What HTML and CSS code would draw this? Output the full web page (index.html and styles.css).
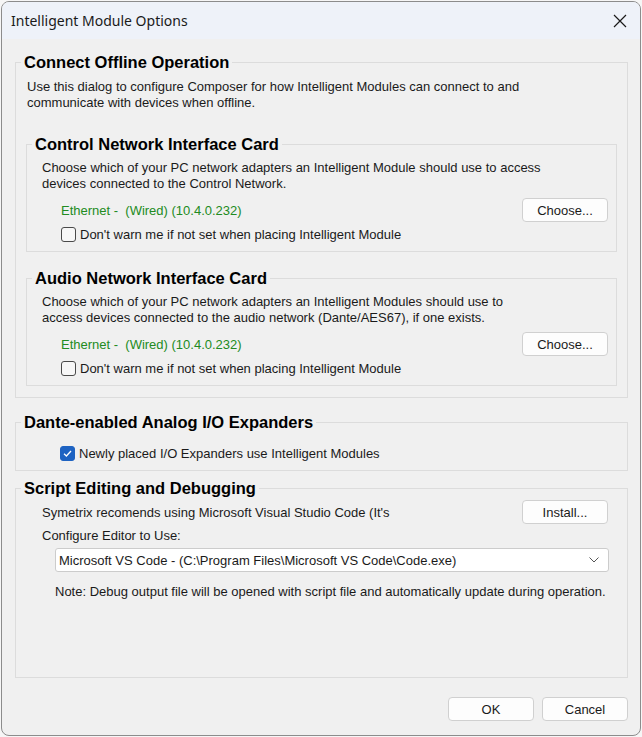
FILE: index.html
```html
<!doctype html>
<html lang="en">
  <head>
    <meta charset="UTF-8" />
    <meta name="viewport" content="width=device-width, initial-scale=1.0" />
    <title>Intelligent Module Options</title>
    <link rel="stylesheet" href="styles.css">
  </head>
  <body>
    <div class="dialog">
      <div class="titlebar">
        <span class="title">Intelligent Module Options</span>
        <svg class="close" width="14" height="14" viewBox="0 0 14 14">
          <path d="M1 1 L13 13 M13 1 L1 13" stroke="#1a1a1a" stroke-width="1.2" fill="none" />
        </svg>
      </div>

      <div class="content">
        <fieldset class="group offline">
          <legend>Connect Offline Operation</legend>
          <div class="group-body">
            <p class="intro">
              Use this dialog to configure Composer for how Intelligent Modules can connect to and<br>
              communicate with devices when offline.
            </p>

            <fieldset class="group inner">
              <legend>Control Network Interface Card</legend>
              <div class="group-body">
                <p class="desc">
                  Choose which of your PC network adapters an Intelligent Module should use to access<br>
                  devices connected to the Control Network.
                </p>
                <div class="adapter-row">
                  <span class="adapter">Ethernet -&nbsp; (Wired) (10.4.0.232)</span>
                  <button class="btn">Choose...</button>
                </div>
                <label class="check">
                  <span class="box"></span>
                  Don't warn me if not set when placing Intelligent Module
                </label>
              </div>
            </fieldset>

            <fieldset class="group inner">
              <legend>Audio Network Interface Card</legend>
              <div class="group-body">
                <p class="desc">
                  Choose which of your PC network adapters an Intelligent Modules should use to<br>
                  access devices connected to the audio network (Dante/AES67), if one exists.
                </p>
                <div class="adapter-row">
                  <span class="adapter">Ethernet -&nbsp; (Wired) (10.4.0.232)</span>
                  <button class="btn">Choose...</button>
                </div>
                <label class="check">
                  <span class="box"></span>
                  Don't warn me if not set when placing Intelligent Module
                </label>
              </div>
            </fieldset>
          </div>
        </fieldset>

        <fieldset class="group dante">
          <legend>Dante-enabled Analog I/O Expanders</legend>
          <div class="group-body">
            <label class="check">
              <span class="box checked">
                <svg width="11" height="11" viewBox="0 0 11 11">
                  <path d="M2 5.8 L4.4 8 L9 3" stroke="#fff" stroke-width="1.3" fill="none" />
                </svg>
              </span>
              Newly placed I/O Expanders use Intelligent Modules
            </label>
          </div>
        </fieldset>

        <fieldset class="group script">
          <legend>Script Editing and Debugging</legend>
          <div class="group-body">
            <div class="install-row">
              <span>Symetrix recomends using Microsoft Visual Studio Code (It's</span>
              <button class="btn">Install...</button>
            </div>
            <p class="editor-label">Configure Editor to Use:</p>
            <div class="select">
              <span>Microsoft VS Code - (C:\Program Files\Microsoft VS Code\Code.exe)</span>
              <svg width="10" height="6" viewBox="0 0 10 6">
                <path d="M0.5 0.5 L5 5 L9.5 0.5" stroke="#555" stroke-width="1" fill="none" />
              </svg>
            </div>
            <p class="note">Note: Debug output file will be opened with script file and automatically update during operation.</p>
          </div>
        </fieldset>
      </div>

      <div class="footer">
        <button class="btn">OK</button>
        <button class="btn">Cancel</button>
      </div>
    </div>
  </body>
</html>
```

FILE: styles.css
```css
* {
  margin: 0;
  padding: 0;
  box-sizing: border-box;
}

body {
  background: #f6f6f6;
  font-family: "Liberation Sans", Arial, sans-serif;
  font-size: 13px;
  color: #1a1a1a;
}

.dialog {
  width: 640px;
  height: 735px;
  margin: 1px 1px 0 1px;
  border: 1px solid #8c8c8c;
  border-radius: 8px;
  overflow: hidden;
  background: #f0f0f0;
  display: flex;
  flex-direction: column;
}

/* window caption */
.titlebar {
  height: 37px;
  flex: none;
  background: #eef2f9;
  display: flex;
  align-items: center;
  justify-content: space-between;
  padding: 0 13px 0 9px;
}

.title {
  font-family: "Noto Sans", "Open Sans", sans-serif;
  font-size: 14px;
  color: #1a1a1a;
}

.content {
  flex: 1;
  display: flex;
  flex-direction: column;
  padding: 13px 12px 0 13px;
}

/* group boxes */
.group {
  border: 1px solid #dcdcdc;
  min-width: 0;
  padding: 0;
}

.group legend {
  font-family: "Liberation Sans", Arial, sans-serif;
  font-weight: bold;
  font-size: 16.5px;
  line-height: 20px;
  color: #000;
  margin-left: 5px;
  padding: 0 3px;
}

.offline .group-body {
  padding: 7px 10px 11px 11px;
}

.intro {
  line-height: 16px;
  margin-bottom: 23px;
}

.inner {
  margin-left: -1px;
}

.inner .group-body {
  padding: 6px 8px 9px 15px;
}

.inner + .inner {
  margin-top: 16px;
}

.desc {
  line-height: 16px;
}

.adapter-row {
  display: flex;
  align-items: center;
  justify-content: space-between;
  margin-top: 6px;
  padding-left: 19px;
}

.adapter {
  color: #228b22;
}

.check {
  display: flex;
  align-items: center;
  gap: 4px;
  height: 16px;
  margin-top: 4px;
  margin-left: 19px;
}

.box {
  width: 15px;
  height: 15px;
  border: 1px solid #4a4a4a;
  border-radius: 3px;
  background: #f7f7f7;
  display: flex;
  align-items: center;
  justify-content: center;
}

.box.checked {
  background: #1e63c2;
  border-color: #1e63c2;
}

.dante {
  margin-top: 14px;
}

.dante .group-body {
  padding: 13px 10px 9px 10px;
}

.dante .check {
  margin-top: 0;
  margin-left: 34px;
}

.script {
  flex: 1;
  margin-top: 7px;
}

.script .group-body {
  padding: 2px 19px 0 26px;
}

.install-row {
  display: flex;
  align-items: center;
  justify-content: space-between;
}

.editor-label {
  line-height: 16px;
  margin-top: 4px;
}

.select {
  height: 24px;
  margin: 4px -1px 0 13px;
  background: #fff;
  border: 1px solid #cccccc;
  border-radius: 3px;
  display: flex;
  align-items: center;
  justify-content: space-between;
  padding: 0 9px 0 3px;
}

.note {
  line-height: 16px;
  margin-top: 12px;
  margin-left: 13px;
}

/* push buttons */
.btn {
  width: 86px;
  height: 24px;
  background: #fdfdfd;
  border: 1px solid #d0d0d0;
  border-radius: 4px;
  font-family: "Liberation Sans", Arial, sans-serif;
  font-size: 13px;
  color: #1a1a1a;
}

.footer {
  flex: none;
  height: 57px;
  display: flex;
  justify-content: flex-end;
  gap: 8px;
  padding: 19px 12px 0 0;
}
```
